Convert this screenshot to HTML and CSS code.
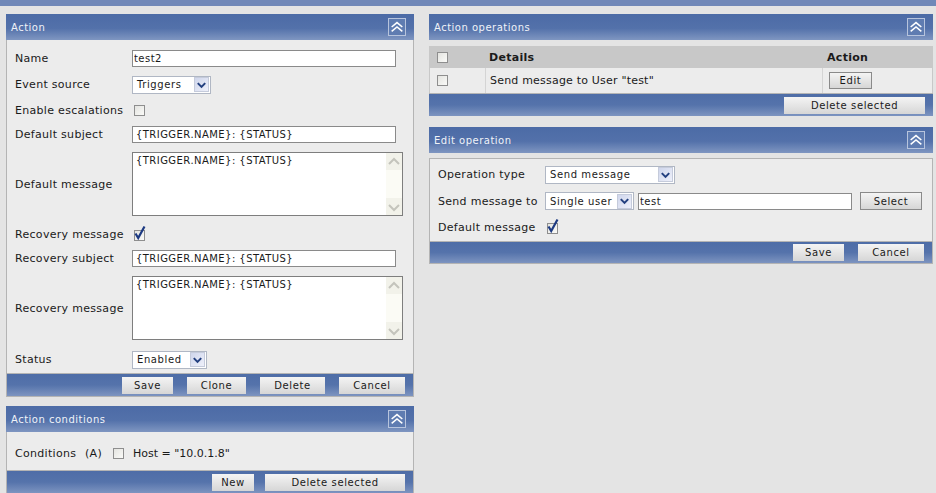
FILE: index.html
```html
<!DOCTYPE html>
<html>
<head>
<meta charset="utf-8">
<title>Action</title>
<link rel="stylesheet" href="styles.css">
</head>
<body>
<div class="topbar"></div>
<div class="columns">
  <div class="col col-left">
    <section class="panel">
      <header class="phead"><span>Action</span><span class="toggle"><svg viewBox="0 0 18 18" width="16" height="16"><path d="M3 9 9 4l6 5M3 14l6-5 6 5" fill="none" stroke="#fff" stroke-width="1.7"/></svg></span></header>
      <div class="pbody form form-main">
        <div class="row r26"><label>Name</label><input class="text w-264" value="test2"></div>
        <div class="row r27"><label>Event source</label><div class="select s-triggers"><span>Triggers</span><i class="arrow"><svg viewBox="0 0 14 14" width="14" height="14"><path d="M3 5l4 4 4-4" fill="none" stroke="#23407f" stroke-width="2.2"/></svg></i></div></div>
        <div class="row r24"><label>Enable escalations</label><span class="chk offset"></span></div>
        <div class="row r24"><label>Default subject</label><input class="text w-264 mono" value="{TRIGGER.NAME}: {STATUS}"></div>
        <div class="row r76"><label>Default message</label><div class="area"><textarea>{TRIGGER.NAME}: {STATUS}</textarea><div class="sbar"><i class="sb-btn"><svg viewBox="0 0 16 16" width="16" height="16"><path d="M3 10l5-5 5 5" fill="none" stroke="#c4c4bc" stroke-width="2"/></svg></i><i class="sb-btn"><svg viewBox="0 0 16 16" width="16" height="16"><path d="M3 6l5 5 5-5" fill="none" stroke="#c4c4bc" stroke-width="2"/></svg></i></div></div></div>
        <div class="row r24"><label>Recovery message</label><span class="chk offset checked"><svg viewBox="0 0 13 16" width="13" height="16"><path d="M2.5 8.5l2.7 4.5L11.5 1.5" fill="none" stroke="#1d3a82" stroke-width="2.2"/></svg></span></div>
        <div class="row r24"><label>Recovery subject</label><input class="text w-264 mono" value="{TRIGGER.NAME}: {STATUS}"></div>
        <div class="row r76"><label>Recovery message</label><div class="area"><textarea>{TRIGGER.NAME}: {STATUS}</textarea><div class="sbar"><i class="sb-btn"><svg viewBox="0 0 16 16" width="16" height="16"><path d="M3 10l5-5 5 5" fill="none" stroke="#c4c4bc" stroke-width="2"/></svg></i><i class="sb-btn"><svg viewBox="0 0 16 16" width="16" height="16"><path d="M3 6l5 5 5-5" fill="none" stroke="#c4c4bc" stroke-width="2"/></svg></i></div></div></div>
        <div class="row r27"><label>Status</label><div class="select s-enabled"><span>Enabled</span><i class="arrow"><svg viewBox="0 0 14 14" width="14" height="14"><path d="M3 5l4 4 4-4" fill="none" stroke="#23407f" stroke-width="2.2"/></svg></i></div></div>
      </div>
      <footer class="pfoot"><button class="btn b-51">Save</button><button class="btn b-59">Clone</button><button class="btn b-65">Delete</button><button class="btn b-66">Cancel</button></footer>
    </section>
    <section class="panel">
      <header class="phead"><span>Action conditions</span><span class="toggle"><svg viewBox="0 0 18 18" width="16" height="16"><path d="M3 9 9 4l6 5M3 14l6-5 6 5" fill="none" stroke="#fff" stroke-width="1.7"/></svg></span></header>
      <div class="pbody cond">
        <span class="cond-label">Conditions</span><span class="cond-key">(A)</span><span class="chk"></span><span class="cond-val">Host = "10.0.1.8"</span>
      </div>
      <footer class="pfoot foot-cond"><button class="btn b-42">New</button><button class="btn b-140">Delete selected</button></footer>
    </section>
  </div>
  <div class="col col-right">
    <section class="panel noframe">
      <header class="phead"><span>Action operations</span><span class="toggle"><svg viewBox="0 0 18 18" width="16" height="16"><path d="M3 9 9 4l6 5M3 14l6-5 6 5" fill="none" stroke="#fff" stroke-width="1.7"/></svg></span></header>
      <div class="tablewrap">
        <div class="thead"><div class="c-check"><span class="chk"></span></div><div class="c-details">Details</div><div class="c-action">Action</div></div>
        <div class="trow"><div class="c-check"><span class="chk"></span></div><div class="c-details">Send message to User "test"</div><div class="c-action"><button class="btn framed">Edit</button></div></div>
      </div>
      <footer class="pfoot"><button class="btn b-141">Delete selected</button></footer>
    </section>
    <section class="panel noframe">
      <header class="phead"><span>Edit operation</span><span class="toggle"><svg viewBox="0 0 18 18" width="16" height="16"><path d="M3 9 9 4l6 5M3 14l6-5 6 5" fill="none" stroke="#fff" stroke-width="1.7"/></svg></span></header>
      <div class="editwrap">
        <div class="pbody form form-edit">
          <div class="row r27"><label>Operation type</label><div class="select s-optype"><span>Send message</span><i class="arrow"><svg viewBox="0 0 14 14" width="14" height="14"><path d="M3 5l4 4 4-4" fill="none" stroke="#23407f" stroke-width="2.2"/></svg></i></div></div>
          <div class="row r26"><label>Send message to</label><div class="select s-single"><span>Single user</span><i class="arrow"><svg viewBox="0 0 14 14" width="14" height="14"><path d="M3 5l4 4 4-4" fill="none" stroke="#23407f" stroke-width="2.2"/></svg></i></div><input class="text w-214" value="test"><button class="btn framed b-select">Select</button></div>
          <div class="row r26"><label>Default message</label><span class="chk offset checked"><svg viewBox="0 0 13 16" width="13" height="16"><path d="M2.5 8.5l2.7 4.5L11.5 1.5" fill="none" stroke="#1d3a82" stroke-width="2.2"/></svg></span></div>
        </div>
        <footer class="pfoot foot-edit"><button class="btn b-51">Save</button><button class="btn b-66">Cancel</button></footer>
      </div>
    </section>
  </div>
</div>
</body>
</html>
```
FILE: styles.css
```css
* { box-sizing: border-box; }
html, body { margin: 0; padding: 0; }
body {
  width: 936px;
  height: 493px;
  overflow: hidden;
  background: #e4e4e4;
  font-family: "DejaVu Sans", Verdana, sans-serif;
  font-size: 11px;
  color: #1a1a1a;
}
.topbar { height: 6px; background: #7088b8; }
.columns { display: flex; padding: 8px 3px 0 6px; gap: 15px; align-items: flex-start; }
.col { display: flex; flex-direction: column; }
.col-left { width: 408px; gap: 9px; }
.col-right { width: 504px; gap: 11px; }
.panel { background: #ececec; border: 1px solid #b4b4b4; border-top: 0; }
.panel.noframe { background: none; border: 0; }
.phead {
  height: 26px;
  margin: 0 -1px;
  padding: 0 8px 0 5px;
  display: flex;
  align-items: center;
  justify-content: space-between;
  background: linear-gradient(#4c6ba6 0%, #5371aa 55%, #7f96c1 100%);
  color: #f0f3f8;
  font-size: 10px;
  letter-spacing: .5px;
}
.noframe .phead { margin: 0; }
.toggle {
  width: 18px;
  height: 18px;
  border: 1px solid #b7c4dd;
  background: #5f7cb1;
  display: flex;
  align-items: center;
  justify-content: center;
}
.pfoot {
  display: flex;
  justify-content: flex-end;
  align-items: center;
  gap: 14px;
  height: 23px;
  padding: 0 8px 0 0;
  background: linear-gradient(#4e6da7 0%, #5573ab 50%, #7d94c0 100%);
  border-top: 1px solid #b4b4b4;
}
.foot-cond { gap: 11px; }
.foot-edit { height: 22px; margin-top: 1px; }
.btn {
  height: 17px;
  padding: 0;
  border: 0;
  background: linear-gradient(#f4f4f4, #d6d6d6);
  font: 10px "DejaVu Sans", Verdana, sans-serif;
  letter-spacing: .6px;
  color: #1a1a1a;
}
.b-51 { width: 51px; }
.b-59 { width: 59px; }
.b-65 { width: 65px; }
.b-66 { width: 66px; }
.b-42 { width: 42px; }
.b-140 { width: 140px; }
.b-141 { width: 141px; }
.framed { border: 1px solid #8a8a8a; }

.form { display: flex; flex-direction: column; }
.form-main { padding-top: 5px; }
.row { display: flex; align-items: center; padding-left: 8px; }
.row label { width: 117px; flex: none; white-space: nowrap; letter-spacing: .3px; }
.r24 { height: 24px; }
.r26 { height: 26px; }
.r27 { height: 27px; }
.r76 { height: 76px; }

.text {
  height: 17px;
  padding: 0 1px;
  border: 1px solid #8a8a8a;
  background: #fff;
  font: 10px "DejaVu Sans", Verdana, sans-serif;
  letter-spacing: .45px;
  color: #1a1a1a;
  outline: 0;
}
.mono { padding-left: 3px; }
.w-264 { width: 264px; }
.w-214 { width: 214px; }

.select {
  height: 18px;
  display: flex;
  align-items: center;
  justify-content: space-between;
  padding: 0 1px 0 4px;
  background: #fff;
  border: 1px solid #b0b7c4;
  font-size: 10px;
  letter-spacing: .6px;
  flex: none;
}
.arrow {
  width: 15px;
  height: 15px;
  display: flex;
  align-items: center;
  justify-content: center;
  background: linear-gradient(135deg, #cfd6ec, #eef0fa);
  border: 1px solid #c5cbdb;
}
.s-triggers { width: 79px; }
.s-enabled { width: 75px; }
.s-optype { width: 130px; }
.s-single { width: 89px; }

.chk {
  width: 11px;
  height: 11px;
  display: inline-flex;
  align-items: flex-end;
  justify-content: center;
  flex: none;
  border: 1px solid #8e8e8e;
  background: linear-gradient(135deg, #e4e4e0, #fafaf8);
  overflow: visible;
}
.chk svg { flex: none; margin-bottom: -1px; }
.offset { margin-left: 2px; }
.checked { margin-top: 2px; }

.area {
  width: 271px;
  height: 64px;
  display: flex;
  border: 1px solid #7e7e7e;
  background: #fff;
}
.area textarea {
  flex: 1;
  min-width: 0;
  border: 0;
  padding: 2px 3px;
  resize: none;
  overflow: hidden;
  outline: 0;
  background: #fff;
  font: 10px "DejaVu Sans", Verdana, sans-serif;
  letter-spacing: .45px;
  color: #1a1a1a;
}
.sbar {
  width: 16px;
  display: flex;
  flex-direction: column;
  justify-content: space-between;
  background: #fbfbf5;
}
.sb-btn {
  height: 17px;
  display: flex;
  align-items: center;
  justify-content: center;
  background: #f2f2ea;
}

.cond {
  height: 38px;
  display: flex;
  align-items: center;
  padding: 4px 0 0 8px;
  letter-spacing: .3px;
}
.cond-label { width: 70px; }
.cond-key { width: 28px; }
.cond-val { margin-left: 9px; letter-spacing: 0; }

.tablewrap { margin-top: 6px; border-left: 1px solid #c8c8c8; border-right: 1px solid #c8c8c8; }
.thead, .trow { display: flex; align-items: center; }
.thead { height: 22px; background: #c8c8c8; font-weight: bold; }
.trow { height: 25px; background: #ececec; letter-spacing: .2px; }
.c-check { width: 55px; padding-left: 7px; display: flex; align-items: center; height: 100%; flex: none; }
.c-details { flex: 1; padding-left: 4px; height: 100%; display: flex; align-items: center; }
.c-action { width: 109px; padding-left: 4px; height: 100%; display: flex; align-items: center; flex: none; }
.trow .c-check, .trow .c-action { height: 100%; }
.trow .c-details { border-left: 1px solid #d4d4d4; border-right: 1px solid #d4d4d4; }
.trow .btn { width: 43px; margin-left: 2px; }
.thead .c-details, .thead .c-action { letter-spacing: .3px; }

.editwrap { margin-top: 5px; border: 1px solid #b4b4b4; background: #ececec; }
.form-edit { padding-top: 2px; }
.form-edit .row { padding-left: 8px; }
.form-edit .row label { width: 107px; }
.form-edit .text { margin-left: 4px; }
.form-edit .chk { margin-left: 2px; }
.b-select { width: 62px; height: 18px; margin-left: 8px; }
```
